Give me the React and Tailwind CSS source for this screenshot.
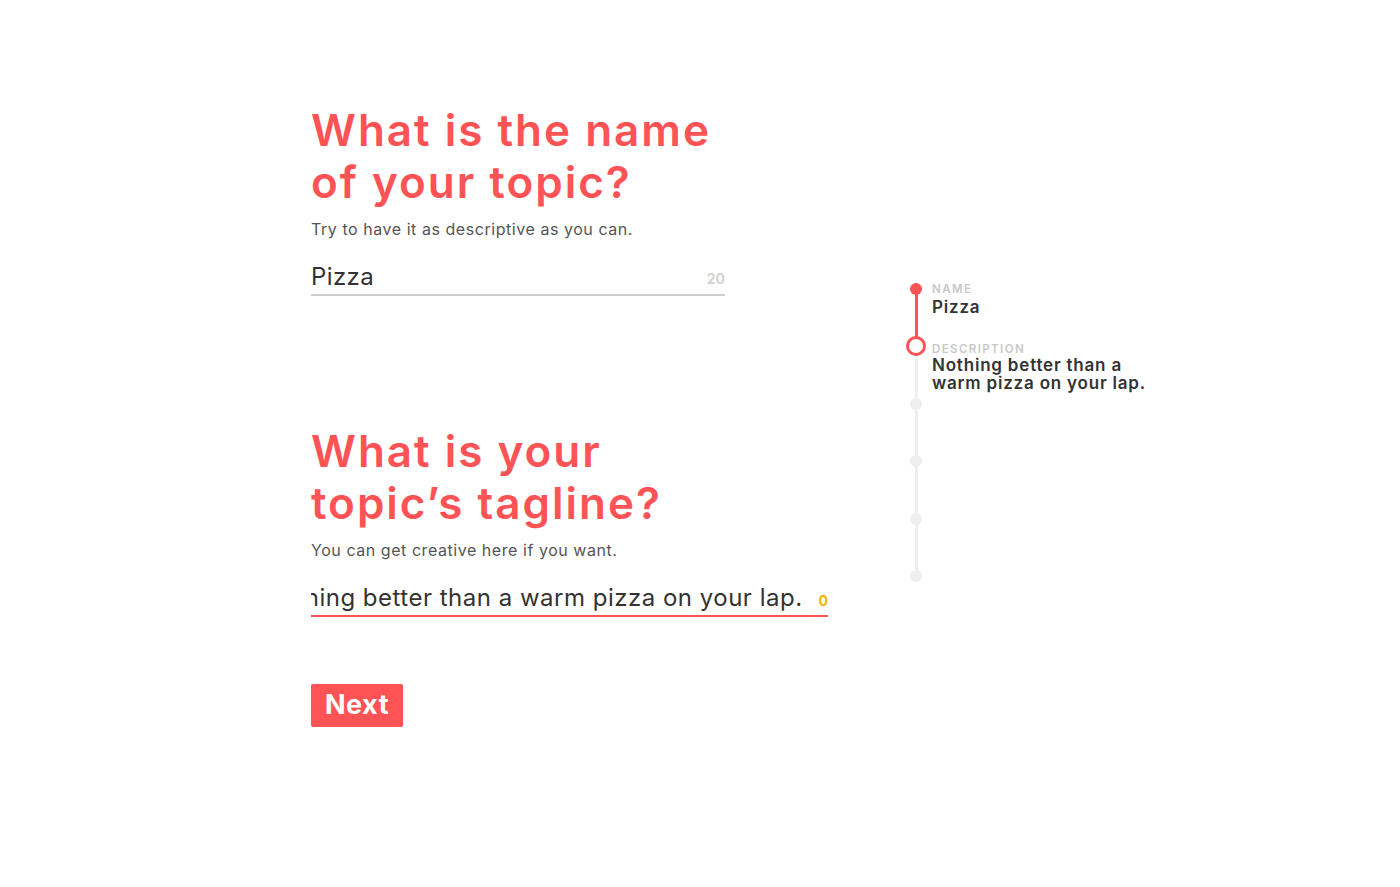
import React from "react";

const font = { fontFamily: "Inter, 'Noto Sans', sans-serif" };

function Field({ title1, title2, sub, children }) {
  return (
    <div className="flex flex-col">
      <h1 className="text-[44px] leading-[52px] font-semibold text-[#ff5356] tracking-[2px]">
        {title1}
        <br />
        {title2}
      </h1>
      <p className="mt-[11px] text-[16px] leading-[20px] text-[#555] tracking-[0.55px]">{sub}</p>
      {children}
    </div>
  );
}

function Dot({ mt }) {
  return <div className={`relative w-[12px] h-[12px] rounded-full bg-[#efefef] ${mt}`} />;
}

export default function App() {
  return (
    <div className="w-[1400px] h-[887px] bg-white flex" style={font}>
      <div className="pl-[311px] pt-[104px] w-[906px] flex flex-col">
        <Field title1="What is the name" title2="of your topic?" sub="Try to have it as descriptive as you can.">
          <div className="mt-[23px] w-[414px] flex items-end justify-between border-b-2 border-[#cfcfcf] pb-[2px]">
            <span className="text-[24px] leading-[30px] text-[#333] tracking-[0.4px]">Pizza</span>
            <span className="text-[14px] font-bold text-[#d3d3d3] mb-[3px]">20</span>
          </div>
        </Field>
        <div className="mt-[129px]">
          <Field title1="What is your" title2="topic’s tagline?" sub="You can get creative here if you want.">
            <div className="mt-[23px] w-[517px] flex items-end border-b-2 border-[#ff5356] pb-[2px]">
              <div className="flex-1 overflow-hidden flex justify-end whitespace-nowrap">
                <span className="text-[24px] leading-[30px] text-[#333] tracking-[0.5px]">Nothing better than a warm pizza on your lap.</span>
              </div>
              <span className="ml-[16px] text-[14px] font-bold text-[#f7b500] mb-[2px]">0</span>
            </div>
          </Field>
        </div>
        <button className="mt-[67px] w-[92px] h-[43px] bg-[#ff5356] rounded-[2px] text-white text-[27px] font-bold tracking-[0.5px] flex items-center justify-center">
          Next
        </button>
      </div>
      <div className="pt-[283px] flex">
        <div className="relative w-[20px] flex flex-col items-center">
          <div className="absolute left-[8.5px] top-[6px] w-[3px] h-[57px] bg-[#ff5356]" />
          <div className="absolute left-[8.5px] top-[63px] w-[3px] h-[230px] bg-[#efefef]" />
          <div className="relative w-[12px] h-[12px] rounded-full bg-[#ff5356]" />
          <div className="relative w-[20px] h-[20px] rounded-full border-[3px] border-[#ff5356] bg-white mt-[41px]" />
          <Dot mt="mt-[42px]" />
          <Dot mt="mt-[45px]" />
          <Dot mt="mt-[46px]" />
          <Dot mt="mt-[45px]" />
        </div>
        <div className="ml-[6px] flex flex-col">
          <div className="text-[11.5px] leading-[12px] font-semibold tracking-[1.4px] text-[#c8c8c8]">NAME</div>
          <div className="mt-[3px] text-[17px] leading-[18px] font-semibold text-[#333] tracking-[0.8px]">Pizza</div>
          <div className="mt-[27px] text-[11.5px] leading-[12px] font-semibold tracking-[1.4px] text-[#c8c8c8]">DESCRIPTION</div>
          <div className="mt-[1px] text-[17px] leading-[18px] font-semibold text-[#333] tracking-[0.8px] w-[260px]">
            Nothing better than a<br />warm pizza on your lap.
          </div>
        </div>
      </div>
    </div>
  );
}
